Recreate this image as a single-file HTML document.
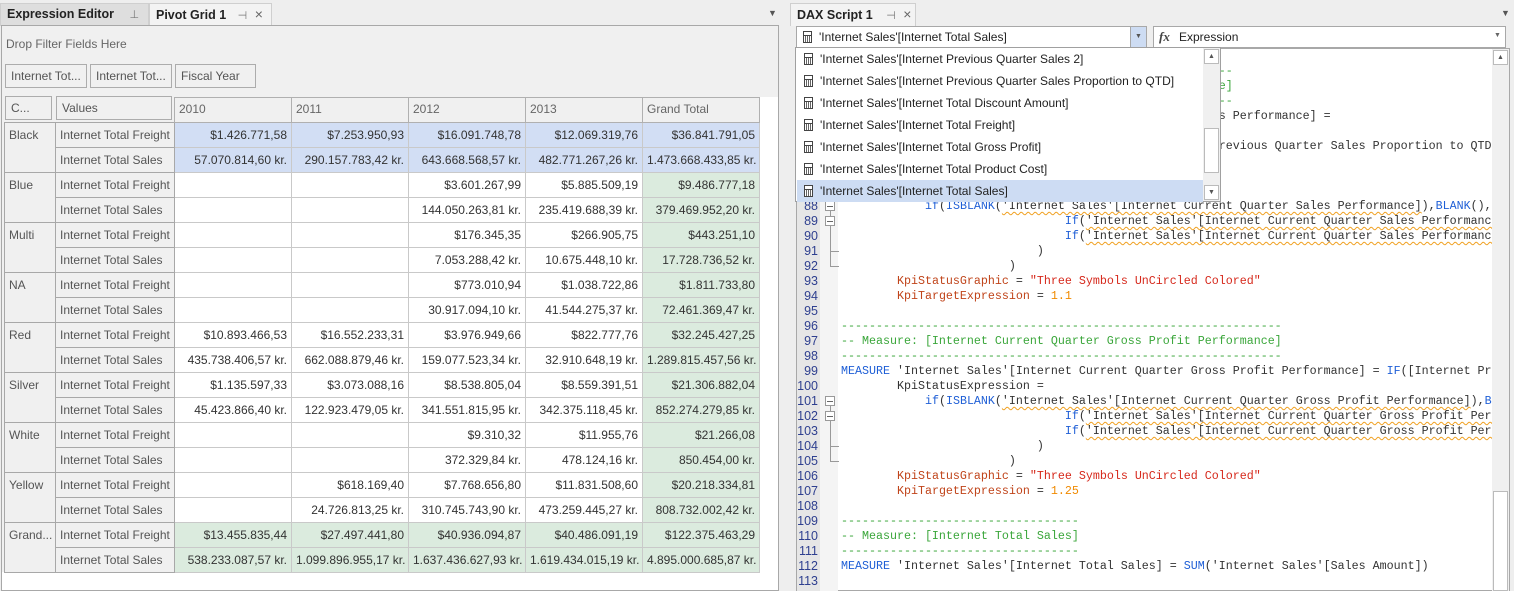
<!DOCTYPE html>
<html><head><meta charset="utf-8"><style>
*{box-sizing:border-box;margin:0;padding:0}
body{width:1514px;height:591px;overflow:hidden;background:#eeeeee;font-family:"Liberation Sans",sans-serif;font-size:12px;color:#333;position:relative}
.abs{position:absolute}
.tab{position:absolute;top:3px;height:23px;border:1px solid #cfcfcf;border-bottom:none;font-weight:bold;font-size:12.5px;line-height:21px;padding-left:6px;color:#222}
.pin{font-weight:normal;color:#777;font-size:11px}
.x{font-weight:normal;color:#666;font-size:14px}
table{border-collapse:collapse;position:absolute;left:4px;top:97px;table-layout:fixed;width:755px}
td{height:25px;border:1px solid #c9c9c9;padding:0 4px;white-space:nowrap;overflow:hidden;font-size:12px;color:#333}
td.h{background:#f0f0f0;border-color:#a8a8a8;color:#555;vertical-align:top;padding-top:5px}
td.v{background:#f0f0f0;border-color:#a8a8a8;color:#555}
td.n{text-align:right}
td.b{background:#d2def4}
td.g{background:#dbebde}
td.y{background:#f0f0f0;border-color:#b0b0b0;color:#666;padding-top:4px;vertical-align:top}
.fbtn{position:absolute;top:64px;height:24px;border:1px solid #acacac;color:#555;line-height:22px;padding-left:5px;font-size:12px}
pre{position:absolute;left:841px;top:49px;width:651px;height:542px;overflow:hidden;font-family:"Liberation Mono",monospace;font-size:11.67px;line-height:15px;color:#333}
.k{color:#1f5fd6}.c{color:#3aa63a}.s{color:#d6281b}.p{color:#c0441a}.num{color:#f08a00}
.w{text-decoration:underline wavy #f0a020;text-decoration-thickness:1px;text-underline-offset:2px}
.ln{position:absolute;left:797px;top:49px;width:21px;text-align:right;font-family:"Liberation Sans",sans-serif;font-size:12.5px;line-height:15px;color:#2e3f8f}
.fold{position:absolute;left:826px;width:10px;height:10px;border:1px solid #999;background:#fff}
.fold:after{content:"";position:absolute;left:1px;top:3.5px;width:6px;height:1px;background:#666}
.item{position:absolute;left:1px;width:406px;height:22px;line-height:22px;padding-left:23px;font-size:12px;color:#222}
.calc{position:absolute;left:7px;top:5px;width:9px;height:12px;border:1px solid #444;background:repeating-linear-gradient(90deg,#fff 0 1px,#666 1px 2px)}
.calc:before{content:"";position:absolute;left:0;top:0;width:7px;height:3px;background:#fff;border-bottom:1px solid #444}
</style></head><body>

<!-- LEFT -->
<div class="tab" style="left:0;width:149px;background:#dedede">Expression Editor <span class="pin" style="margin-left:12px">⊥</span></div>
<div class="tab" style="left:149px;width:123px;background:#f3f3f3">Pivot Grid 1 <span class="pin" style="margin-left:8px">⊣</span> <span class="x" style="margin-left:4px">×</span></div>
<div class="abs" style="left:768px;top:8px;color:#555;font-size:9px">▼</div>
<div class="abs" style="left:1px;top:25px;width:778px;height:566px;border:1px solid #a8a8a8;background:#fff"></div>
<div class="abs" style="left:2px;top:26px;width:776px;height:71px;background:#f0f0f0"></div>
<div class="abs" style="left:2px;top:97px;width:172px;height:475px;background:#f0f0f0"></div>
<div class="abs" style="left:6px;top:37px;color:#666">Drop Filter Fields Here</div>
<div class="fbtn" style="left:5px;width:82px">Internet Tot...</div>
<div class="fbtn" style="left:90px;width:82px">Internet Tot...</div>
<div class="fbtn" style="left:175px;width:81px">Fiscal Year</div>
<div class="fbtn" style="left:5px;top:96px;width:47px;height:24px">C...</div>
<div class="fbtn" style="left:56px;top:96px;width:116px;height:24px">Values</div>

<table>
<colgroup><col style="width:51px"><col style="width:119px"><col style="width:117px"><col style="width:117px"><col style="width:117px"><col style="width:117px"><col style="width:117px"></colgroup>
<tr><td style="border:none;background:transparent"></td><td style="border:none;background:transparent"></td><td class="y">2010</td><td class="y">2011</td><td class="y">2012</td><td class="y">2013</td><td class="y">Grand Total</td></tr>
<tr><td class="h" rowspan="2">Black</td><td class="v">Internet Total Freight</td><td class="n b">$1.426.771,58</td><td class="n b">$7.253.950,93</td><td class="n b">$16.091.748,78</td><td class="n b">$12.069.319,76</td><td class="n b">$36.841.791,05</td></tr>
<tr><td class="v">Internet Total Sales</td><td class="n b">57.070.814,60 kr.</td><td class="n b">290.157.783,42 kr.</td><td class="n b">643.668.568,57 kr.</td><td class="n b">482.771.267,26 kr.</td><td class="n b">1.473.668.433,85 kr.</td></tr>
<tr><td class="h" rowspan="2">Blue</td><td class="v">Internet Total Freight</td><td></td><td></td><td class="n">$3.601.267,99</td><td class="n">$5.885.509,19</td><td class="n g">$9.486.777,18</td></tr>
<tr><td class="v">Internet Total Sales</td><td></td><td></td><td class="n">144.050.263,81 kr.</td><td class="n">235.419.688,39 kr.</td><td class="n g">379.469.952,20 kr.</td></tr>
<tr><td class="h" rowspan="2">Multi</td><td class="v">Internet Total Freight</td><td></td><td></td><td class="n">$176.345,35</td><td class="n">$266.905,75</td><td class="n g">$443.251,10</td></tr>
<tr><td class="v">Internet Total Sales</td><td></td><td></td><td class="n">7.053.288,42 kr.</td><td class="n">10.675.448,10 kr.</td><td class="n g">17.728.736,52 kr.</td></tr>
<tr><td class="h" rowspan="2">NA</td><td class="v">Internet Total Freight</td><td></td><td></td><td class="n">$773.010,94</td><td class="n">$1.038.722,86</td><td class="n g">$1.811.733,80</td></tr>
<tr><td class="v">Internet Total Sales</td><td></td><td></td><td class="n">30.917.094,10 kr.</td><td class="n">41.544.275,37 kr.</td><td class="n g">72.461.369,47 kr.</td></tr>
<tr><td class="h" rowspan="2">Red</td><td class="v">Internet Total Freight</td><td class="n">$10.893.466,53</td><td class="n">$16.552.233,31</td><td class="n">$3.976.949,66</td><td class="n">$822.777,76</td><td class="n g">$32.245.427,25</td></tr>
<tr><td class="v">Internet Total Sales</td><td class="n">435.738.406,57 kr.</td><td class="n">662.088.879,46 kr.</td><td class="n">159.077.523,34 kr.</td><td class="n">32.910.648,19 kr.</td><td class="n g">1.289.815.457,56 kr.</td></tr>
<tr><td class="h" rowspan="2">Silver</td><td class="v">Internet Total Freight</td><td class="n">$1.135.597,33</td><td class="n">$3.073.088,16</td><td class="n">$8.538.805,04</td><td class="n">$8.559.391,51</td><td class="n g">$21.306.882,04</td></tr>
<tr><td class="v">Internet Total Sales</td><td class="n">45.423.866,40 kr.</td><td class="n">122.923.479,05 kr.</td><td class="n">341.551.815,95 kr.</td><td class="n">342.375.118,45 kr.</td><td class="n g">852.274.279,85 kr.</td></tr>
<tr><td class="h" rowspan="2">White</td><td class="v">Internet Total Freight</td><td></td><td></td><td class="n">$9.310,32</td><td class="n">$11.955,76</td><td class="n g">$21.266,08</td></tr>
<tr><td class="v">Internet Total Sales</td><td></td><td></td><td class="n">372.329,84 kr.</td><td class="n">478.124,16 kr.</td><td class="n g">850.454,00 kr.</td></tr>
<tr><td class="h" rowspan="2">Yellow</td><td class="v">Internet Total Freight</td><td></td><td class="n">$618.169,40</td><td class="n">$7.768.656,80</td><td class="n">$11.831.508,60</td><td class="n g">$20.218.334,81</td></tr>
<tr><td class="v">Internet Total Sales</td><td></td><td class="n">24.726.813,25 kr.</td><td class="n">310.745.743,90 kr.</td><td class="n">473.259.445,27 kr.</td><td class="n g">808.732.002,42 kr.</td></tr>
<tr><td class="h" rowspan="2">Grand...</td><td class="v">Internet Total Freight</td><td class="n g">$13.455.835,44</td><td class="n g">$27.497.441,80</td><td class="n g">$40.936.094,87</td><td class="n g">$40.486.091,19</td><td class="n g">$122.375.463,29</td></tr>
<tr><td class="v">Internet Total Sales</td><td class="n g">538.233.087,57 kr.</td><td class="n g">1.099.896.955,17 kr.</td><td class="n g">1.637.436.627,93 kr.</td><td class="n g">1.619.434.015,19 kr.</td><td class="n g">4.895.000.685,87 kr.</td></tr>
</table>

<!-- RIGHT -->
<div class="tab" style="left:790px;width:126px;background:#f3f3f3">DAX Script 1 <span class="pin" style="margin-left:10px">⊣</span> <span class="x" style="margin-left:4px">×</span></div>
<div class="abs" style="left:1501px;top:8px;color:#555;font-size:9px">▼</div>

<div class="abs" style="left:796px;top:48px;width:714px;height:543px;border:1px solid #a8a8a8;background:#fff"></div>
<div class="abs" style="left:797px;top:49px;width:23px;height:542px;background:#e6e6e6"></div>
<div class="abs" style="left:820px;top:49px;width:18px;height:542px;background:#f4f4f4"></div>
<div class="ln">78<br>79<br>80<br>81<br>82<br>83<br>84<br>85<br>86<br>87<br>88<br>89<br>90<br>91<br>92<br>93<br>94<br>95<br>96<br>97<br>98<br>99<br>100<br>101<br>102<br>103<br>104<br>105<br>106<br>107<br>108<br>109<br>110<br>111<br>112<br>113</div>
<div class="abs" style="left:830px;top:211px;width:1px;height:56px;background:#999"></div>
<div class="abs" style="left:830px;top:251px;width:9px;height:1px;background:#999"></div>
<div class="abs" style="left:830px;top:266px;width:9px;height:1px;background:#999"></div>
<div class="abs" style="left:830px;top:406px;width:1px;height:56px;background:#999"></div>
<div class="abs" style="left:830px;top:446px;width:9px;height:1px;background:#999"></div>
<div class="abs" style="left:830px;top:461px;width:9px;height:1px;background:#999"></div>
<div class="fold" style="top:201px;left:825px"></div>
<div class="fold" style="top:216px;left:825px"></div>
<div class="fold" style="top:396px;left:825px"></div>
<div class="fold" style="top:411px;left:825px"></div>

<pre>

<span class="c">--------------------------------------------------------</span>
<span class="c">-- Measure: [Internet Current Quarter Sales Performance]</span>
<span class="c">--------------------------------------------------------</span>
<span class="k">MEASURE</span> 'Internet Sales'[Internet Current Quarter Sales Performance] =
        KpiStatusExpression =
                           'Internet Sales'[Internet Previous Quarter Sales Proportion to QTD]
        KpiStatusExpression =


            <span class="k">if</span>(<span class="k">ISBLANK</span>(<span class="w">'Internet Sales'[Internet Current Quarter Sales Performance]</span>),<span class="k">BLANK</span>(),
                                <span class="k">If</span>(<span class="w">'Internet Sales'[Internet Current Quarter Sales Performance] &lt; 0.8</span>
                                <span class="k">If</span>(<span class="w">'Internet Sales'[Internet Current Quarter Sales Performance] &lt; 1.07</span>
                            )
                        )
        <span class="p">KpiStatusGraphic</span> = <span class="s">"Three Symbols UnCircled Colored"</span>
        <span class="p">KpiTargetExpression</span> = <span class="num">1.1</span>

<span class="c">---------------------------------------------------------------</span>
<span class="c">-- Measure: [Internet Current Quarter Gross Profit Performance]</span>
<span class="c">---------------------------------------------------------------</span>
<span class="k">MEASURE</span> 'Internet Sales'[Internet Current Quarter Gross Profit Performance] = <span class="k">IF</span>([Internet Previous
        KpiStatusExpression =
            <span class="k">if</span>(<span class="k">ISBLANK</span>(<span class="w">'Internet Sales'[Internet Current Quarter Gross Profit Performance]</span>),<span class="k">BLANK</span>(),
                                <span class="k">If</span>(<span class="w">'Internet Sales'[Internet Current Quarter Gross Profit Performance]</span>
                                <span class="k">If</span>(<span class="w">'Internet Sales'[Internet Current Quarter Gross Profit Performance]</span>
                            )
                        )
        <span class="p">KpiStatusGraphic</span> = <span class="s">"Three Symbols UnCircled Colored"</span>
        <span class="p">KpiTargetExpression</span> = <span class="num">1.25</span>

<span class="c">----------------------------------</span>
<span class="c">-- Measure: [Internet Total Sales]</span>
<span class="c">----------------------------------</span>
<span class="k">MEASURE</span> 'Internet Sales'[Internet Total Sales] = <span class="k">SUM</span>('Internet Sales'[Sales Amount])
</pre>

<!-- editor scrollbar -->
<div class="abs" style="left:1492px;top:49px;width:17px;height:542px;background:#f0f0f0"></div>
<div class="abs" style="left:1493px;top:50px;width:15px;height:15px;border:1px solid #bbb;background:#fff;font-size:7px;text-align:center;line-height:13px;color:#555">▲</div>
<div class="abs" style="left:1493px;top:491px;width:15px;height:100px;border:1px solid #bbb;background:#fff"></div>

<!-- combos -->
<div class="abs" style="left:796px;top:26px;width:351px;height:22px;border:1px solid #a8a8a8;background:#fff">
 <div class="calc" style="left:6px;top:4px"></div>
 <div class="abs" style="left:22px;top:3px;font-size:12px;color:#222">'Internet Sales'[Internet Total Sales]</div>
 <div class="abs" style="left:333px;top:0;width:16px;height:20px;background:#cddcf3;border-left:1px solid #a8a8a8;font-size:7px;text-align:center;line-height:20px;color:#555">▼</div>
</div>
<div class="abs" style="left:1153px;top:26px;width:353px;height:22px;border:1px solid #a8a8a8;background:#fff">
 <div class="abs" style="left:5px;top:2px;font-family:'Liberation Serif',serif;font-style:italic;font-weight:bold;font-size:13px;color:#444">fx</div>
 <div class="abs" style="left:25px;top:3px;color:#222">Expression</div>
 <div class="abs" style="left:340px;top:5px;font-size:7px;color:#666">▼</div>
</div>

<!-- dropdown -->
<div class="abs" style="left:795px;top:47px;width:426px;height:155px;border:1px solid #a0a0a0;background:#fff">
 <div class="item" style="top:0"><div class="calc"></div>'Internet Sales'[Internet Previous Quarter Sales 2]</div>
 <div class="item" style="top:22px"><div class="calc"></div>'Internet Sales'[Internet Previous Quarter Sales Proportion to QTD]</div>
 <div class="item" style="top:44px"><div class="calc"></div>'Internet Sales'[Internet Total Discount Amount]</div>
 <div class="item" style="top:66px"><div class="calc"></div>'Internet Sales'[Internet Total Freight]</div>
 <div class="item" style="top:88px"><div class="calc"></div>'Internet Sales'[Internet Total Gross Profit]</div>
 <div class="item" style="top:110px"><div class="calc"></div>'Internet Sales'[Internet Total Product Cost]</div>
 <div class="item" style="top:132px;background:#cddcf3"><div class="calc"></div>'Internet Sales'[Internet Total Sales]</div>
 <div class="abs" style="left:407px;top:0;width:17px;height:153px;background:#f0f0f0"></div>
 <div class="abs" style="left:408px;top:1px;width:15px;height:15px;border:1px solid #bbb;background:#fff;font-size:7px;text-align:center;line-height:13px;color:#555">▲</div>
 <div class="abs" style="left:408px;top:80px;width:15px;height:45px;border:1px solid #bbb;background:#fff"></div>
 <div class="abs" style="left:408px;top:137px;width:15px;height:15px;border:1px solid #bbb;background:#fff;font-size:7px;text-align:center;line-height:13px;color:#555">▼</div>
</div>
</body></html>
